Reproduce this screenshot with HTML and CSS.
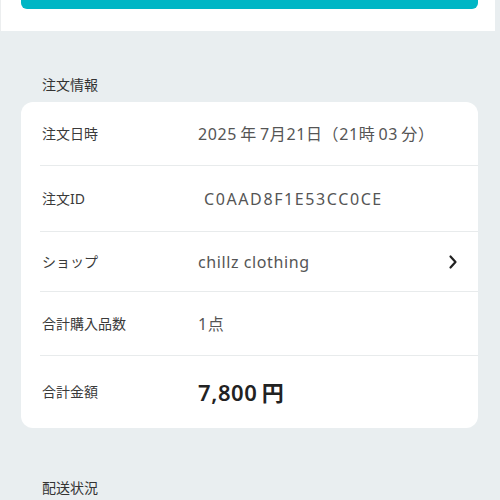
FILE: index.html
```html
<!DOCTYPE html>
<html lang="ja">
<head>
<meta charset="utf-8">
<link rel="stylesheet" href="styles.css">
</head>
<body>
<div class="page">
  <div class="top">
    <div class="btn"></div>
  </div>
  <div class="content">
    <h2 class="section-title">注文情報</h2>
    <div class="card">
      <div class="row r1">
        <div class="label">注文日時</div>
        <div class="value">2025&#8201;年&#8201;7月21日（21時&#8201;03&#8201;分）</div>
      </div>
      <div class="row r2">
        <div class="label">注文ID</div>
        <div class="value id">C0AAD8F1E53CC0CE</div>
      </div>
      <div class="row r3">
        <div class="label">ショップ</div>
        <div class="value">chillz clothing</div>
        <svg class="chev" width="10" height="16" viewBox="0 0 10 16"><path d="M2.5 2.5 L7.5 8 L2.5 13.5" fill="none" stroke="#222" stroke-width="2.2" stroke-linecap="round" stroke-linejoin="round"/></svg>
      </div>
      <div class="row r4">
        <div class="label">合計購入品数</div>
        <div class="value">1点</div>
      </div>
      <div class="row r5">
        <div class="label">合計金額</div>
        <div class="value price">7,800&#8201;円</div>
      </div>
    </div>
    <h2 class="section-title second">配送状況</h2>
  </div>
</div>
</body>
</html>
```
FILE: styles.css
```css
html, body {
  margin: 0;
  padding: 0;
  background: #e9eef0;
  font-family: "Noto Sans", "Noto Sans CJK JP", sans-serif;
}
.page {
  width: 500px;
  height: 500px;
  overflow: hidden;
  background: #e9eef0;
}
.top {
  width: 495px;
  height: 31px;
  background: #ffffff;
  border-left: 1px solid #eceeef;
  box-sizing: border-box;
}
.btn {
  margin-left: 20px;
  width: 457px;
  height: 9px;
  background: #00b6c5;
  border-radius: 0 0 6px 6px;
}
.content {
  padding: 44px 0 0 0;
}
.section-title {
  margin: 0 0 7px 42px;
  font-size: 14px;
  font-weight: 400;
  color: #333;
  line-height: 20px;
}
.section-title.second {
  margin-top: 50px;
}
.card {
  margin-left: 21px;
  width: 457px;
  background: #fff;
  border-radius: 12px;
  overflow: hidden;
}
.row {
  display: flex;
  align-items: center;
  margin-left: 19px;
  padding-left: 2px;
  border-bottom: 1px solid #e8ebec;
}
.r1 { height: 63px; }
.r2 { height: 65px; }
.r3 { height: 59px; }
.r4 { height: 63px; }
.r5 { height: 72px; border-bottom: none; }
.label {
  width: 156px;
  flex: none;
  font-size: 14px;
  color: #3a3a3a;
  line-height: 20px;
}
.value {
  flex: 1;
  font-size: 16px;
  color: #555;
  line-height: 22px;
  letter-spacing: 0.6px;
}
.value.id {
  padding-left: 6px;
  letter-spacing: 1.6px;
}
.value.price {
  font-size: 22px;
  font-weight: 600;
  color: #222;
  line-height: 28px;
  letter-spacing: 0.6px;
}
.chev {
  margin-right: 20px;
  flex: none;
}
```
